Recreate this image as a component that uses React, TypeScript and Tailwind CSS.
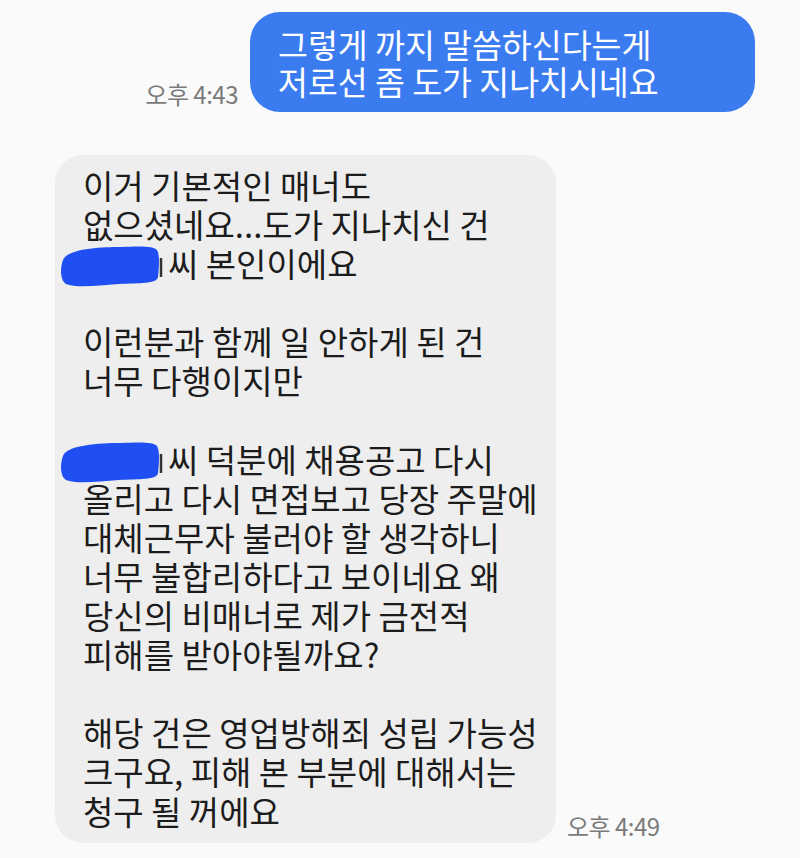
import { Fragment } from "react";

const font = { fontFamily: '"Noto Sans CJK KR", "Noto Sans", sans-serif' };

const sent = ["그렇게 까지 말씀하신다는게", "저로선 좀 도가 지나치시네요"];

// null = blank line, "#" prefix = line that starts with a redacted name
const received: (string | null)[] = [
  "이거 기본적인 매너도",
  "없으셨네요...도가 지나치신 건",
  "#씨 본인이에요",
  null,
  "이런분과 함께 일 안하게 된 건",
  "너무 다행이지만",
  null,
  "#씨 덕분에 채용공고 다시",
  "올리고 다시 면접보고 당장 주말에",
  "대체근무자 불러야 할 생각하니",
  "너무 불합리하다고 보이네요 왜",
  "당신의 비매너로 제가 금전적",
  "피해를 받아야될까요?",
  null,
  "해당 건은 영업방해죄 성립 가능성",
  "크구요, 피해 본 부분에 대해서는",
  "청구 될 꺼에요",
];

const Redacted = () => (
  <span className="relative inline-block w-[85px] h-[39px] align-top">
    <svg
      className="absolute -left-[22px] top-[2px] block max-w-none w-[106px] h-[42px]"
      viewBox="0 0 106 42"
    >
      <path d="M100 12 L100 31" stroke="#333" strokeWidth="2.5" />
      <path
        d="M2 14 C6 3 38 1 60 1 C80 0 93 0 96 4 C99 9 98 22 97 31 C96 38 78 37 58 38 C36 40 14 42 5 38 C-1 34 -1 22 2 14 Z"
        fill="#1f4ff2"
      />
    </svg>
  </span>
);

const Stamp = ({ children }: { children: string }) => (
  <span className="text-[24px] text-[#7a7a7a] whitespace-nowrap tracking-[-0.5px]" style={font}>
    {children}
  </span>
);

export default function App() {
  return (
    <div className="w-[800px] h-[858px] bg-[#fafafa] overflow-hidden" style={font}>
      <div className="flex items-end justify-end pt-[12px] pr-[45px] gap-[12px]">
        <div>
          <Stamp>오후 4:43</Stamp>
        </div>
        <div className="w-[505px] h-[100px] rounded-[30px] bg-[#3a7cf0] pl-[28px] pt-[13px] text-white text-[32.5px] leading-[37px]">
          {sent.map((l) => (
            <div key={l} className="whitespace-nowrap">
              {l}
            </div>
          ))}
        </div>
      </div>

      <div className="flex items-end pl-[55px] mt-[43px] gap-[11px]">
        <div className="w-[501px] rounded-[28px] bg-[#eeeeee] pl-[28px] pt-[11px] pb-[12px] text-[33px] leading-[39.1px] text-[#1c1c1c]">
          {received.map((l, i) => (
            <div key={i} className="whitespace-nowrap h-[39.1px]">
              {l === null ? null : l.startsWith("#") ? (
                <Fragment>
                  <Redacted />
                  {l.slice(1)}
                </Fragment>
              ) : (
                l
              )}
            </div>
          ))}
        </div>
        <div className="-mb-[1px]">
          <Stamp>오후 4:49</Stamp>
        </div>
      </div>
    </div>
  );
}
